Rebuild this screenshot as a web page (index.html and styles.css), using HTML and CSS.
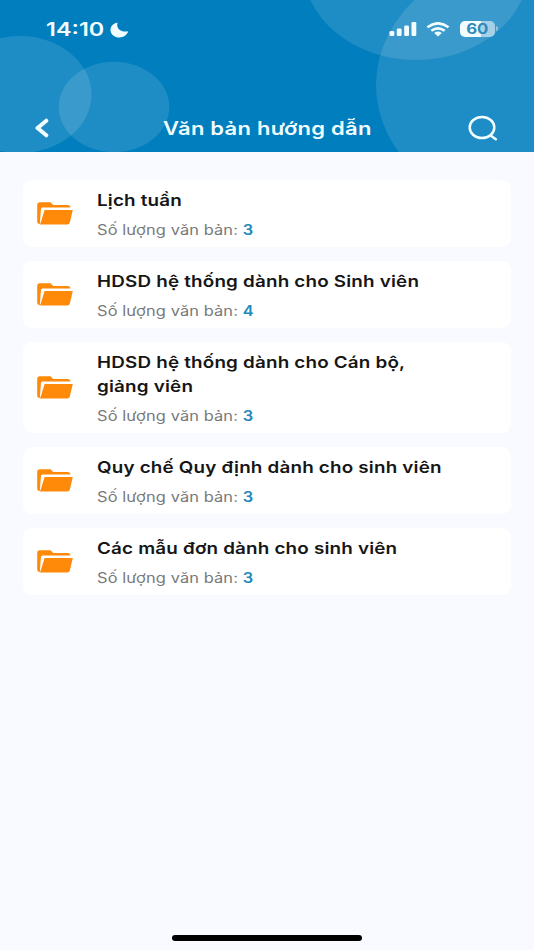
FILE: index.html
```html
<!DOCTYPE html>
<html lang="vi">
<head>
<meta charset="utf-8">
<meta name="viewport" content="width=device-width, initial-scale=1">
<title>Văn bản hướng dẫn</title>
<link rel="stylesheet" href="styles.css">
</head>
<body>
<svg class="defs" width="0" height="0" aria-hidden="true">
  <symbol id="folder" viewBox="0 0 36 23">
    <path fill="#ff8908" d="M2.800.3h9.400c1.400 0 2 .4 2.800 1.500.6.9 1.200 1.200 2.300 1.200h13.200c1.900 0 2.800.8 3 2.600H6.300c-1.600 0-2.200.6-2.400 1.900L2.800 22.200C1 21.900.2 21 .2 19.300V3C.2 1.300 1.100.3 2.800.3z"/>
    <path fill="#ff8908" d="M7.600 8h28.200l-2.900 12.300c-.4 1.600-1.200 2.200-2.800 2.200H2.800L3.900 20z"/>
  </symbol>
</svg>
<header class="header">
  <svg class="bubbles" viewBox="0 0 534 152" aria-hidden="true">
    <g fill="#fff" fill-opacity=".12">
      <ellipse cx="20" cy="94.500" rx="71.500" ry="58.500"/>
      <ellipse cx="114" cy="107" rx="55.300" ry="45.200"/>
      <ellipse cx="416" cy="-33" rx="113" ry="93"/>
      <ellipse cx="534" cy="85" rx="158" ry="130"/>
    </g>
  </svg>
  <div class="status">
    <span class="time">14:10</span>
    <svg class="moon" width="19" height="16" viewBox="0 0 19 16"><path fill="#f2fdff" d="M7.500.4C6 5.500 9.800 10.700 18.300 9.300 16.600 13.500 13.400 15.500 9.600 15.500 4.500 15.500.5 12.200.5 7.900.5 4.400 3.200 1.200 7.500.4z"/></svg>
    <svg class="signal" width="28" height="15" viewBox="0 0 28 15" fill="#f2fdff"><rect x=".5" y="9" width="4.800" height="5" rx="1.300"/><rect x="7.800" y="6.500" width="4.800" height="7.500" rx="1.300"/><rect x="15.200" y="3.500" width="4.800" height="10.500" rx="1.300"/><rect x="22.500" y="0" width="4.800" height="14" rx="1.300"/></svg>
    <svg class="wifi" width="24" height="15" viewBox="0 0 24 15" fill="none" stroke="#f2fdff" stroke-width="2.600"><path d="M1.400 5.200Q12-2.600 22.600 5.200"/><path d="M5.300 8.800Q12 3.800 18.700 8.800"/><path fill="#f2fdff" stroke="none" d="M8.200 11Q12 8.200 15.800 11L12 14.500z"/></svg>
    <span class="battery"><span class="level">60</span></span>
  </div>
  <nav class="bar">
    <svg class="back" width="16" height="20" viewBox="0 0 16 20"><path d="M12.300 2.700 3.500 10l8.800 7.300" fill="none" stroke="#f2fdff" stroke-width="4" stroke-linecap="round" stroke-linejoin="round"/></svg>
    <h1 class="heading">Văn bản hướng dẫn</h1>
    <svg class="search" width="30" height="26" viewBox="0 0 30 26" fill="none" stroke="#f2fdff" stroke-width="2.500" stroke-linecap="round"><ellipse cx="14" cy="12.500" rx="12.300" ry="10.500"/><path d="M22.300 20.300l5.500 4"/></svg>
  </nav>
</header>
<main class="list">
  <article class="card"><svg class="folder"><use href="#folder"/></svg><div><h2>Lịch tuần</h2><p>Số lượng văn bản: <b>3</b></p></div></article>
  <article class="card"><svg class="folder"><use href="#folder"/></svg><div><h2>HDSD hệ thống dành cho Sinh viên</h2><p>Số lượng văn bản: <b>4</b></p></div></article>
  <article class="card"><svg class="folder"><use href="#folder"/></svg><div><h2>HDSD hệ thống dành cho Cán bộ,<br>giảng viên</h2><p>Số lượng văn bản: <b>3</b></p></div></article>
  <article class="card"><svg class="folder"><use href="#folder"/></svg><div><h2>Quy chế Quy định dành cho sinh viên</h2><p>Số lượng văn bản: <b>3</b></p></div></article>
  <article class="card"><svg class="folder"><use href="#folder"/></svg><div><h2>Các mẫu đơn dành cho sinh viên</h2><p>Số lượng văn bản: <b>3</b></p></div></article>
</main>
<footer class="home"><span class="indicator"></span></footer>
</body>
</html>
```
FILE: styles.css
```css
* { box-sizing: border-box; margin: 0; }
body {
  height: 950px;
  display: flex;
  flex-direction: column;
  background: #f9faff;
  font-family: Inter, "Noto Sans", sans-serif;
  overflow: hidden;
}
.defs { position: absolute; }
.header {
  position: relative;
  height: 152px;
  flex: none;
  background: #007ebd;
  color: #f2fdff;
  overflow: hidden;
}
.bubbles { position: absolute; inset: 0; width: 534px; height: 152px; }
.status {
  position: relative;
  display: flex;
  align-items: center;
  height: 58px;
  padding: 0 37px 0 46px;
}
.time {
  width: 64px;
  padding-top: 2px;
  font-size: 19px;
  font-weight: 600;
  line-height: 24px;
  white-space: nowrap;
  transform: scaleX(1.23);
  transform-origin: left;
}
.moon { margin-top: 1px; }
.signal { margin-left: auto; }
.wifi { margin: 0 10px 0 9px; }
.battery {
  position: relative;
  width: 35px;
  height: 16px;
  margin-right: 2px;
  border-radius: 5px;
  background: linear-gradient(90deg, #f2fdff 60%, #a5d0e8 60%);
  color: #3189b9;
  font-size: 14px;
  font-weight: 700;
  line-height: 16px;
  text-align: center;
}
.battery::after {
  content: "";
  position: absolute;
  left: 36px;
  top: 5px;
  width: 2px;
  height: 5px;
  border-radius: 0 2px 2px 0;
  background: #8fc3df;
}
.level { display: inline-block; transform: scaleX(1.2); }
.bar {
  position: relative;
  display: flex;
  align-items: center;
  height: 26px;
  margin-top: 57px;
  padding: 0 36px 0 34px;
}
.heading {
  margin-left: 112.500px;
  padding-top: 2px;
  font-size: 18px;
  font-weight: 600;
  line-height: 26px;
  letter-spacing: .2px;
  white-space: nowrap;
  transform: scaleX(1.222);
  transform-origin: left;
}
.search { margin-left: auto; }
.list {
  display: flex;
  flex-direction: column;
  gap: 14px;
  padding: 28px 23px 0;
}
.card {
  display: flex;
  align-items: center;
  gap: 24px;
  min-height: 67px;
  padding: 8px 14px;
  border-radius: 9px;
  background: #fff;
}
.folder { width: 36px; height: 23px; flex: none; margin-top: -1px; }
.card h2 {
  color: #161616;
  font-size: 16px;
  font-weight: 600;
  line-height: 24px;
  letter-spacing: .16px;
  white-space: nowrap;
  transform: scaleX(1.177);
  transform-origin: left;
}
.card p {
  margin-top: 8px;
  margin-bottom: -1px;
  color: #797979;
  font-size: 14px;
  line-height: 20px;
  letter-spacing: .1px;
  white-space: nowrap;
  transform: scaleX(1.17);
  transform-origin: left;
}
.card b { color: #218abb; font-weight: 600; }
.home {
  display: flex;
  justify-content: center;
  margin-top: auto;
  padding-bottom: 9px;
}
.indicator { width: 190px; height: 6px; border-radius: 3px; background: #000; }
```
